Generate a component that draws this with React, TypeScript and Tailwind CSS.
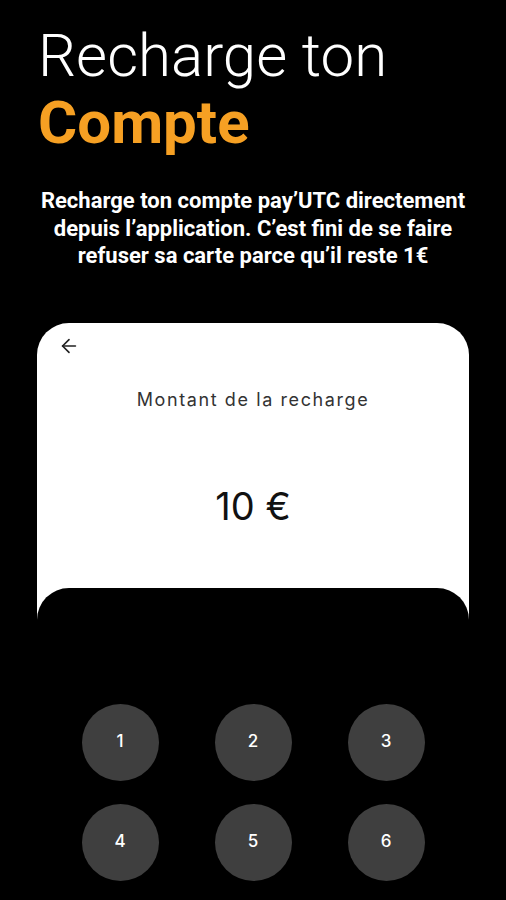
import React from 'react';
import { ArrowLeft } from 'lucide-react';

const keys = ['1', '2', '3', '4', '5', '6'];

export default function App() {
  return (
    <div className="w-[506px] h-[900px] overflow-hidden bg-black font-['Roboto',sans-serif]">
      <div className="px-[38px] pt-[22px]">
        <h1 className="text-[60px] leading-[67px] font-light text-white">Recharge ton</h1>
        <h2 className="text-[60px] leading-[67px] font-bold text-[#f6a023]">Compte</h2>
      </div>

      <p className="mt-[31px] px-[16px] text-center text-[22px] leading-[27.5px] font-bold text-white">
        Recharge ton compte pay’UTC directement
        <br />
        depuis l’application. C’est fini de se faire
        <br />
        refuser sa carte parce qu’il reste 1€
      </p>

      <div className="mx-[37px] mt-[53px] bg-white rounded-t-[32px] overflow-hidden">
        <div className="pl-[21px] pt-[12px] h-[46px]">
          <ArrowLeft className="w-[22px] h-[22px] text-[#222]" strokeWidth={1.8} />
        </div>
        <div className="text-center font-['Inter',sans-serif] text-[18px] leading-[22px] tracking-[1.6px] text-[#333] mt-[20px]">
          Montant de la recharge
        </div>
        <div className="text-center font-['Inter',sans-serif] text-[38px] leading-[44px] text-[#111] mt-[73px]">
          10 €
        </div>
        <div className="mt-[60px] bg-black rounded-t-[32px] pt-[116px] pb-[40px]">
          <div className="grid grid-cols-[77px_77px_77px] justify-center gap-x-[56px] gap-y-[23px]">
            {keys.map((k) => (
              <div
                key={k}
                className="w-[77px] h-[77px] rounded-full bg-[#3f3f3f] flex items-center justify-center text-white text-[17px] font-medium font-['Inter',sans-serif]"
              >
                {k}
              </div>
            ))}
          </div>
        </div>
      </div>
    </div>
  );
}
